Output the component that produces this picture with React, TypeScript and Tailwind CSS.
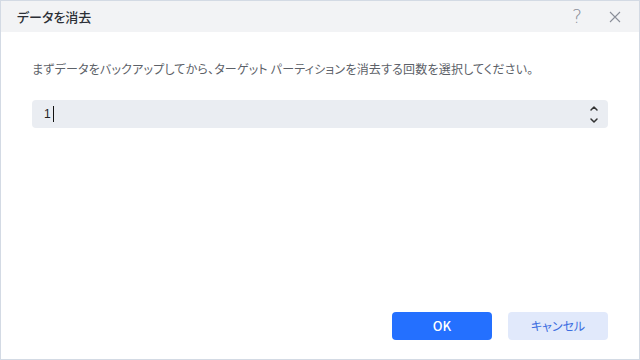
import React from "react";

export default function App() {
  const jp = { fontFamily: '"Noto Sans CJK JP", "Noto Sans", sans-serif' };
  return (
    <div
      className="w-[640px] h-[360px] bg-white border border-[#d3dae4] flex flex-col overflow-hidden [font-feature-settings:'palt']"
      style={jp}
    >
      <div className="h-[31px] bg-[#f2f3f5] flex items-center pl-[16px] pr-[18px] shrink-0">
        <div className="text-[13px] font-medium text-[#2b2f36] flex-1">データを消去</div>
        <div className="flex items-center gap-[27px] text-[#8a8f99]">
          <span className="text-[19px] leading-none" style={{ fontFamily: '"DejaVu Sans", sans-serif', fontWeight: 200 }}>?</span>
          <svg width="12" height="12" viewBox="0 0 12 12" fill="none" stroke="#8a8f99" strokeWidth="1.1">
            <path d="M1 1L11 11M11 1L1 11" />
          </svg>
        </div>
      </div>
      <div className="flex-1 flex flex-col px-[31px] pt-[28px] pb-[19px]">
        <p className="text-[12px] leading-[18px] text-[#5c6168] tracking-[0.2px]">
          まずデータをバックアップしてから、ターゲット パーティションを消去する回数を選択してください。
        </p>
        <div className="mt-[22px] h-[28px] rounded-[4px] bg-[#eaedf2] flex items-center pl-[12px] pr-[9px]">
          <span className="text-[12px] text-[#222] flex items-center" style={{ fontFamily: '"Liberation Sans", sans-serif' }}>
            1<span className="inline-block w-[1px] h-[16px] bg-[#111] ml-[2px]" />
          </span>
          <div className="flex-1" />
          <svg width="10" height="24" viewBox="0 0 10 24" fill="none" stroke="#333" strokeWidth="1.5" strokeLinecap="round" strokeLinejoin="round">
            <path d="M2 8L5 5L8 8" />
            <path d="M2 17L5 20L8 17" />
          </svg>
        </div>
        <div className="flex-1" />
        <div className="flex justify-end gap-[16px]">
          <button className="w-[100px] h-[28px] rounded-[4px] bg-[#2470ff] text-white text-[13px] font-medium">OK</button>
          <button className="w-[100px] h-[28px] rounded-[4px] bg-[#e1e9fb] text-[#3b6de0] text-[12px]">キャンセル</button>
        </div>
      </div>
    </div>
  );
}
